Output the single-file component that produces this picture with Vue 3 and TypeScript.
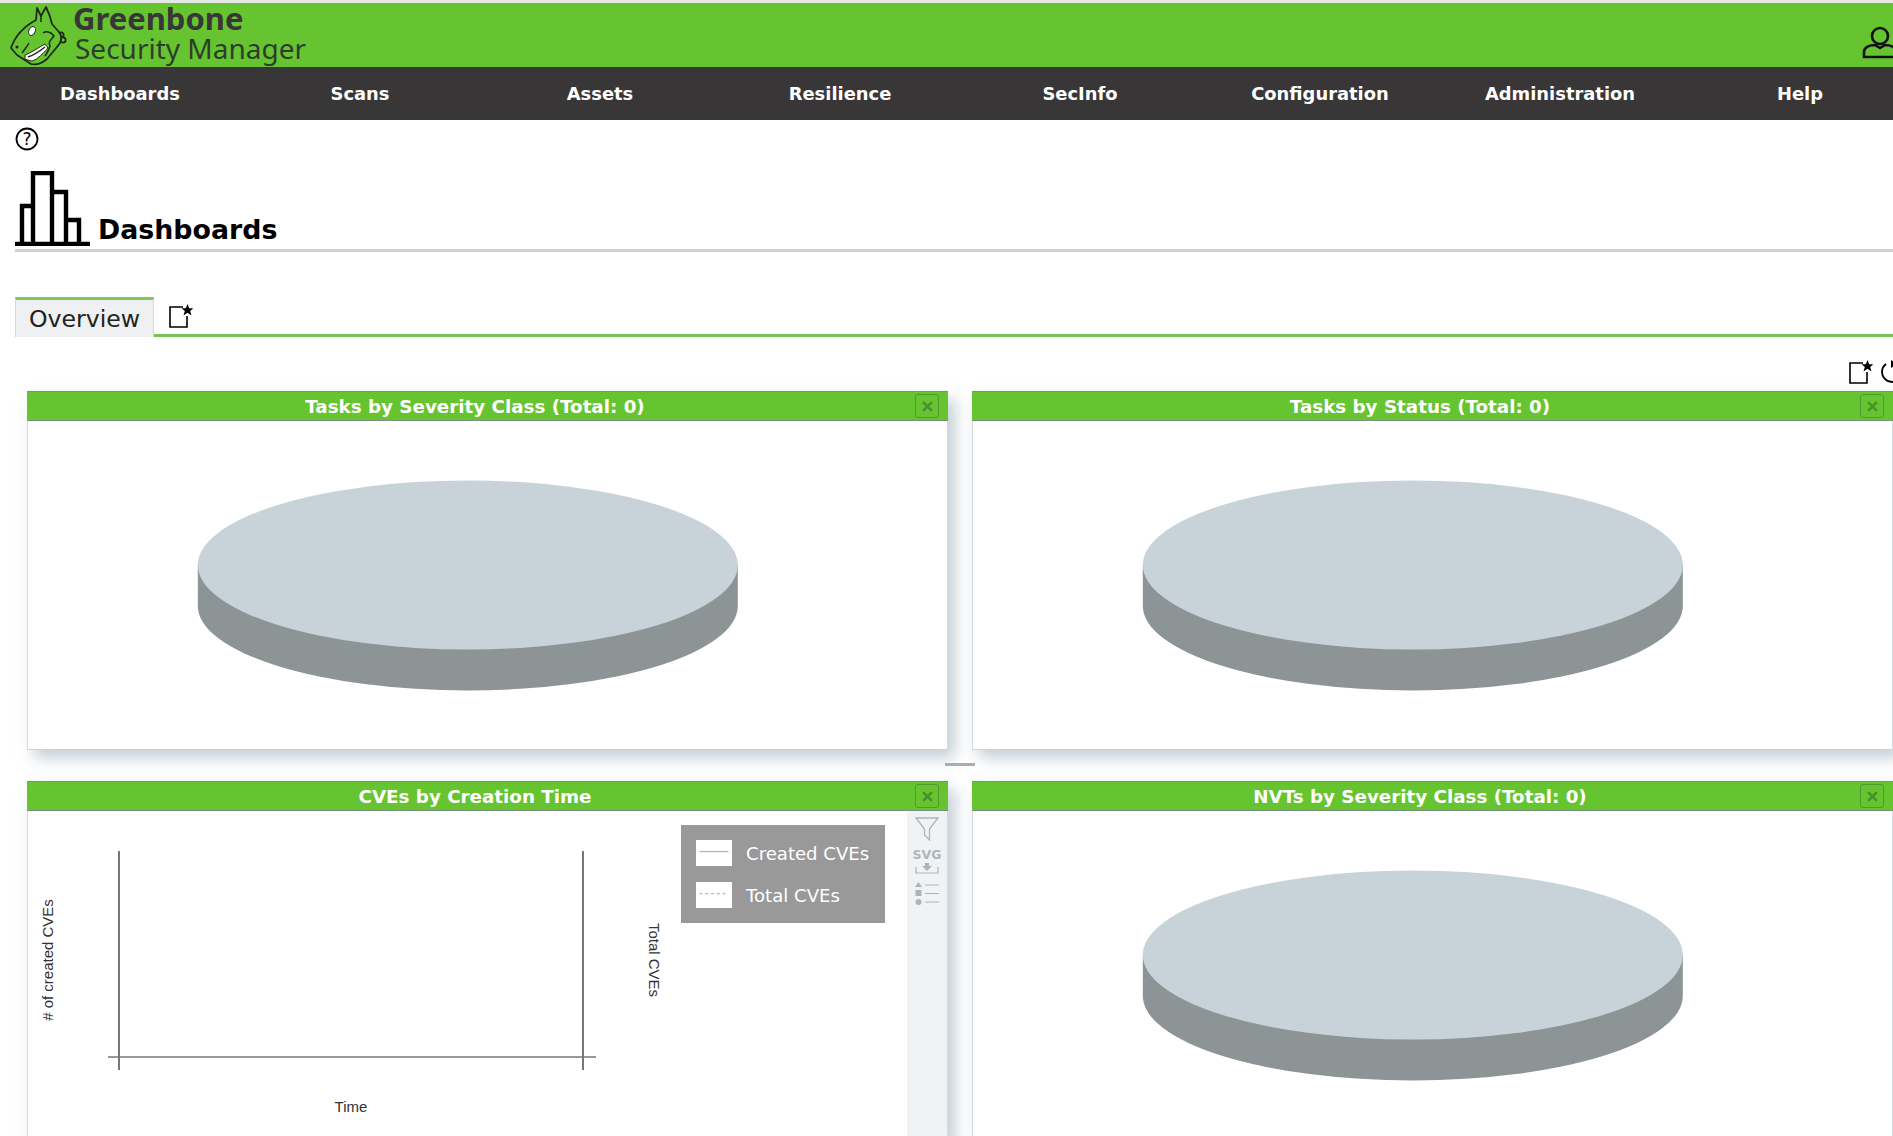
<template>
  <div class="page">
    <header class="topbar">
      <svg class="logo" viewBox="0 0 66 64">
        <circle class="logo-head" cx="56" cy="32" r="2.6" />
        <circle class="logo-head" cx="58" cy="37" r="2.6" />
        <path class="logo-head" d="M6 45 C10 33 20 23 31 17 L32 5 L36 13 L41 4 C44 10 46 16 47 21 L54 29 C58 34 56 40 52 44 L42 56 C36 61 30 62 26 61 L12 52 Z" />
        <path class="logo-line" d="M38 30 C42 27 47 30 49 33 C46 37 43 38 45 43 C44 47 42 50 40 53 M36 13 L36 19 M24 40 C22 44 19 47 17 50" />
        <ellipse class="logo-white" cx="27" cy="28" rx="3.2" ry="4.6" transform="rotate(25 27 28)" />
        <path class="logo-white" d="M20 52 C26 50 34 44 40 41 L43 45 C36 53 30 58 26 58 L20 56 Z" />
        <path class="logo-line" d="M23 54 C29 52 35 48 40 44" />
        <circle class="logo-dot" cx="12" cy="44" r="1.5" />
      </svg>
      <div class="brand">
        <div class="brand-top">Greenbone</div>
        <div class="brand-bottom">Security Manager</div>
      </div>
      <svg class="user-icon" viewBox="0 0 36 34">
        <circle cx="18" cy="10" r="8" />
        <path d="M2 31 V26 C2 21 8 19 13 19 L18 22 L23 19 C28 19 34 21 34 26 V31 Z" />
      </svg>
    </header>

    <nav class="menu">
      <a v-for="item in menuItems" :key="item" class="menu-item">{{ item }}</a>
    </nav>

    <div class="help-row">
      <svg class="help-icon" viewBox="0 0 24 24">
        <circle cx="12" cy="12" r="10.5" />
        <text x="12" y="18" text-anchor="middle">?</text>
      </svg>
    </div>

    <div class="title-row">
      <svg class="title-icon" viewBox="0 0 75 75">
        <path d="M0 73 H75 M7 71 V35 H18 V71 M18 71 V2 H37 V71 M37 21 H51 V71 M51 49 H64 V71" />
      </svg>
      <h1>Dashboards</h1>
    </div>

    <div class="tabs">
      <div class="tab">Overview</div>
      <svg class="new-icon tab-new" viewBox="0 0 24 24">
        <path class="doc" d="M14 3 H1 V23 H18 V12" />
        <path class="star" d="M18.5 0 L20.2 4.2 L24.5 4.2 L21.2 7 L22.5 11.5 L18.5 8.8 L14.5 11.5 L15.8 7 L12.5 4.2 L16.8 4.2 Z" />
      </svg>
    </div>

    <div class="tools">
      <svg class="new-icon" viewBox="0 0 24 24">
        <path class="doc" d="M14 3 H1 V23 H18 V12" />
        <path class="star" d="M18.5 0 L20.2 4.2 L24.5 4.2 L21.2 7 L22.5 11.5 L18.5 8.8 L14.5 11.5 L15.8 7 L12.5 4.2 L16.8 4.2 Z" />
      </svg>
      <svg class="reset-icon" viewBox="0 0 24 24">
        <path d="M8 4 A10 10 0 1 0 20 4" />
        <path class="reset-tip" d="M13 0 L20 4 L13 8 Z" />
      </svg>
    </div>

    <main class="grid">
      <section v-for="panel in panels" :key="panel.title" class="panel">
        <div class="panel-head">
          <span>{{ panel.title }}</span>
          <button class="close-btn">
            <svg viewBox="0 0 10 10"><path d="M1 1 L9 9 M9 1 L1 9" /></svg>
          </button>
        </div>

        <div class="panel-body">
          <svg v-if="panel.kind === 'pie'" class="plot" viewBox="0 0 921 329">
            <path class="pie-side" d="M170.8 144 V185 A270 84.5 0 0 0 710.8 185 V144 Z" />
            <ellipse class="pie-top" cx="440.8" cy="144" rx="270" ry="84.5" />
          </svg>

          <template v-else>
            <svg class="plot" viewBox="0 0 921 329">
              <path class="axis" d="M92 40 V259 M556 40 V259" stroke-width="2" />
              <path class="axis" d="M81 246 H569" stroke-width="1.3" />
              <text class="axis-label" x="324" y="301" text-anchor="middle">Time</text>
              <text class="axis-label" transform="translate(26 149) rotate(-90)" text-anchor="middle"># of created CVEs</text>
              <text class="axis-label" transform="translate(622 149) rotate(90)" text-anchor="middle">Total CVEs</text>
            </svg>

            <div class="legend">
              <div v-for="row in legendRows" :key="row.label" class="legend-row">
                <svg class="legend-swatch" viewBox="0 0 36 27">
                  <line x1="3" y1="12" x2="33" y2="12" :stroke-dasharray="row.dash" />
                </svg>
                <span>{{ row.label }}</span>
              </div>
            </div>

            <div class="side-tools">
              <svg class="tool-funnel" viewBox="0 0 24 24">
                <path d="M1 1 H23 L14.5 12 V23 L9.5 18 V12 Z" />
              </svg>
              <div class="tool-svg">
                <span>SVG</span>
                <svg viewBox="0 0 24 11">
                  <path class="bracket" d="M1 4 V10 H23 V4" />
                  <path class="arrow" d="M10 0 H14 V3 H17 L12 8 L7 3 H10 Z" />
                </svg>
              </div>
              <svg class="tool-list" viewBox="0 0 24 24">
                <path class="fill" d="M3.5 1 L7 6 H0 Z" />
                <rect class="fill" x="0.5" y="9" width="6" height="6" />
                <circle class="fill" cx="3.5" cy="21" r="3" />
                <path class="lines" d="M10 4 H24 M10 12.5 H24 M10 21 H24" />
              </svg>
            </div>
          </template>
        </div>
      </section>
      <div class="resizer"></div>
    </main>
  </div>
</template>

<script setup lang="ts">
interface Panel {
  title: string
  kind: 'pie' | 'chart'
}

const menuItems: string[] = [
  'Dashboards',
  'Scans',
  'Assets',
  'Resilience',
  'SecInfo',
  'Configuration',
  'Administration',
  'Help'
]

const panels: Panel[] = [
  { title: 'Tasks by Severity Class (Total: 0)', kind: 'pie' },
  { title: 'Tasks by Status (Total: 0)', kind: 'pie' },
  { title: 'CVEs by Creation Time', kind: 'chart' },
  { title: 'NVTs by Severity Class (Total: 0)', kind: 'pie' }
]

const legendRows = [
  { label: 'Created CVEs', dash: 'none' },
  { label: 'Total CVEs', dash: '3 3' }
]
</script>

<style>
html,
body {
  margin: 0;
  overflow: hidden;
  background: #fff;
}
</style>

<style scoped>
.page {
  width: 1920px;
  height: 1136px;
  overflow: hidden;
  font-family: "DejaVu Sans", Verdana, sans-serif;
  color: #000;
  background: #fff;
}

.topbar {
  display: flex;
  align-items: center;
  height: 64px;
  border-top: 3px solid #e6e8e6;
  background: #66c430;
}

.logo {
  width: 66px;
  height: 64px;
  margin-left: 5px;
  flex: none;
}

.logo-head {
  fill: #66c430;
  stroke: #1f2b1a;
  stroke-width: 1.8;
  stroke-linejoin: round;
}

.logo-line {
  fill: none;
  stroke: #1f2b1a;
  stroke-width: 1.5;
}

.logo-white {
  fill: #fff;
  stroke: #1f2b1a;
  stroke-width: 1;
}

.logo-dot {
  fill: #1f2b1a;
}

.brand {
  margin: -2px 0 0 2px;
  color: #393637;
  font-family: "Noto Sans", sans-serif;
}

.brand-top {
  font-size: 31px;
  font-weight: 700;
  line-height: 28px;
}

.brand-bottom {
  margin-left: 2px;
  color: #2f3c2c;
  font-size: 28px;
  line-height: 32px;
}

.user-icon {
  width: 36px;
  height: 34px;
  margin-left: auto;
  margin-right: 22px;
  margin-top: 16px;
  flex: none;
  fill: none;
  stroke: #111;
  stroke-width: 2.6;
}

.menu {
  display: flex;
  height: 53px;
  background: #393637;
}

.menu-item {
  width: 240px;
  display: flex;
  align-items: center;
  justify-content: center;
  color: #fff;
  font-size: 17.9px;
  font-weight: 700;
}

.help-row {
  height: 24px;
  padding: 7px 0 0 15px;
}

.help-icon {
  display: block;
  width: 24px;
  height: 24px;
  fill: none;
  stroke: #000;
  stroke-width: 1.8;
}

.help-icon text {
  fill: #000;
  stroke: none;
  font-size: 17px;
  font-family: "DejaVu Sans", sans-serif;
}

.title-row {
  display: flex;
  align-items: flex-end;
  gap: 8px;
  height: 78px;
  margin: 20px 0 0 15px;
  border-bottom: 3px solid #c8d3d9;
}

.title-icon {
  width: 75px;
  height: 75px;
  margin-bottom: 3px;
  fill: none;
  stroke: #000;
  stroke-width: 4.4;
}

h1 {
  margin: 0 0 2px;
  font-size: 26.8px;
  font-weight: 700;
  line-height: 34px;
}

.tabs {
  display: flex;
  align-items: flex-start;
  height: 40px;
  margin: 45px 0 0 15px;
  border-bottom: 3px solid #76c44f;
  box-sizing: border-box;
}

.tab {
  box-sizing: border-box;
  width: 139px;
  height: 40px;
  padding-left: 13px;
  border-top: 3px solid #7dc858;
  border-left: 1px solid #d5d9dc;
  border-right: 1px solid #d5d9dc;
  background: #eef0f2;
  color: #222;
  font-size: 23.6px;
  line-height: 38px;
}

.new-icon {
  width: 24px;
  height: 24px;
  fill: none;
  flex: none;
}

.tab-new {
  margin: 7px 0 0 15px;
}

.doc {
  stroke: #000;
  stroke-width: 1.6;
}

.star {
  fill: #000;
}

.tools {
  display: flex;
  justify-content: flex-end;
  gap: 5px;
  height: 24px;
  margin-top: 23px;
  padding-right: 18px;
}

.reset-icon {
  width: 24px;
  height: 24px;
  fill: none;
  stroke: #000;
  stroke-width: 1.8;
}

.reset-tip {
  fill: #000;
  stroke: none;
}

.grid {
  position: relative;
  display: grid;
  grid-template-columns: 921px 921px;
  grid-auto-rows: 359px;
  gap: 31px 24px;
  margin-top: 7px;
  padding-left: 27px;
}

.panel {
  position: relative;
  display: flex;
  flex-direction: column;
  box-sizing: border-box;
  border-left: 1px solid #d5d9dc;
  border-right: 1px solid #d5d9dc;
  border-bottom: 1px solid #c8d3d9;
  background: #fff;
  box-shadow: 7px 8px 14px rgba(165, 182, 192, 0.65);
}

.panel-head {
  position: relative;
  display: flex;
  align-items: center;
  justify-content: center;
  flex: none;
  box-sizing: border-box;
  height: 30px;
  margin: 0 -1px;
  padding-right: 25px;
  border-top: 1px solid #79907b;
  border-bottom: 1px solid #79907b;
  background: #66c430;
  color: #fff;
  font-size: 18.3px;
  font-weight: 700;
}

.close-btn {
  position: absolute;
  top: 2px;
  right: 9px;
  display: flex;
  align-items: center;
  justify-content: center;
  box-sizing: border-box;
  width: 24px;
  height: 24px;
  padding: 0;
  border: 1px solid #4f9a2c;
  border-radius: 3px;
  background: transparent;
}

.close-btn svg {
  width: 11px;
  height: 11px;
  fill: none;
  stroke: #4a8f2a;
  stroke-width: 2.2;
}

.panel-body {
  position: relative;
  flex: 1;
  min-height: 0;
}

.plot {
  display: block;
  width: 921px;
  height: 329px;
  margin-left: -1px;
}

.pie-side {
  fill: #8d9496;
}

.pie-top {
  fill: #c8d3d9;
}

.axis {
  fill: none;
  stroke: #777;
}

.axis-label {
  fill: #333;
  font-family: "Liberation Sans", Arial, sans-serif;
  font-size: 15px;
}

.legend {
  position: absolute;
  top: 14px;
  left: 653px;
  display: flex;
  flex-direction: column;
  justify-content: center;
  gap: 16px;
  box-sizing: border-box;
  width: 204px;
  height: 98px;
  padding-left: 15px;
  background: #999;
  color: #fff;
  font-size: 18.1px;
}

.legend-row {
  display: flex;
  align-items: center;
  gap: 14px;
  height: 26px;
}

.legend-swatch {
  width: 36px;
  height: 26px;
  background: #fff;
  flex: none;
}

.legend-swatch line {
  stroke: #b5bd9d;
  stroke-width: 1.4;
}

.side-tools {
  position: absolute;
  top: 0;
  right: 0;
  bottom: 0;
  display: flex;
  flex-direction: column;
  align-items: center;
  gap: 6px;
  width: 40px;
  padding-top: 6px;
  box-sizing: border-box;
  background: #eff3f6;
}

.tool-funnel {
  width: 24px;
  height: 24px;
  fill: none;
  stroke: #adb5b9;
  stroke-width: 1.3;
}

.tool-svg {
  display: flex;
  flex-direction: column;
  align-items: center;
  color: #adb5b9;
  font-size: 12.5px;
  font-weight: 700;
  line-height: 16px;
}

.tool-svg svg {
  display: block;
  width: 24px;
  height: 11px;
  fill: none;
}

.bracket {
  stroke: #adb5b9;
  stroke-width: 1.2;
}

.arrow {
  fill: #adb5b9;
}

.tool-list {
  width: 24px;
  height: 24px;
  margin-top: 1px;
}

.tool-list .fill {
  fill: #adb5b9;
}

.tool-list .lines {
  fill: none;
  stroke: #adb5b9;
  stroke-width: 1.2;
}

.resizer {
  position: absolute;
  top: 372px;
  left: 945px;
  width: 30px;
  height: 3px;
  background: #a9adaf;
}
</style>
